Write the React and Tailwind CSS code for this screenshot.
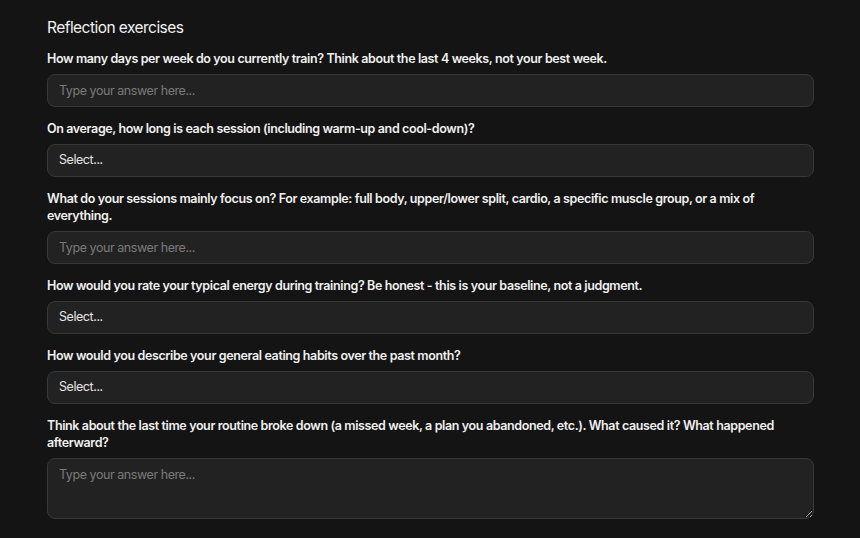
import React from "react";

const questions = [
  {
    label: "How many days per week do you currently train? Think about the last 4 weeks, not your best week.",
    type: "text",
  },
  {
    label: "On average, how long is each session (including warm-up and cool-down)?",
    type: "select",
  },
  {
    label:
      "What do your sessions mainly focus on? For example: full body, upper/lower split, cardio, a specific muscle group, or a mix of everything.",
    type: "text",
  },
  {
    label: "How would you rate your typical energy during training? Be honest - this is your baseline, not a judgment.",
    type: "select",
  },
  {
    label: "How would you describe your general eating habits over the past month?",
    type: "select",
  },
  {
    label:
      "Think about the last time your routine broke down (a missed week, a plan you abandoned, etc.). What caused it? What happened afterward?",
    type: "textarea",
  },
];

const fieldBase =
  "w-full rounded-lg border border-[#383838] bg-[#222222] pl-[11px] pr-3 text-[12.5px] tracking-[-0.035em] text-[#e5e5e5] placeholder:text-[#7a7a7a] outline-none";

const Question = ({ label, type }) => (
  <div className="flex flex-col gap-[7px]">
    <label className="text-[12.5px] font-semibold leading-[17px] tracking-[-0.03em] text-[#f0f0f0]">{label}</label>
    {type === "text" && <input type="text" placeholder="Type your answer here..." className={`${fieldBase} h-[33px]`} />}
    {type === "select" && (
      <button type="button" className={`${fieldBase} h-[33px] text-left`}>
        Select...
      </button>
    )}
    {type === "textarea" && (
      <textarea placeholder="Type your answer here..." className={`${fieldBase} h-[61px] resize-y py-[7px] leading-[17px]`} />
    )}
  </div>
);

export default function App() {
  return (
    <div
      className="min-h-screen bg-[#141414] pl-[47px] pr-[46px] pt-[17px]"
      style={{ fontFamily: "Inter, 'Noto Sans', sans-serif" }}
    >
      <h2 className="text-[15.5px] font-normal leading-[22px] tracking-[-0.035em] text-[#f2f2f2]">Reflection exercises</h2>
      <div className="mt-[11px] flex flex-col gap-[13px]">
        {questions.map((q) => (
          <Question key={q.label} label={q.label} type={q.type} />
        ))}
      </div>
    </div>
  );
}
